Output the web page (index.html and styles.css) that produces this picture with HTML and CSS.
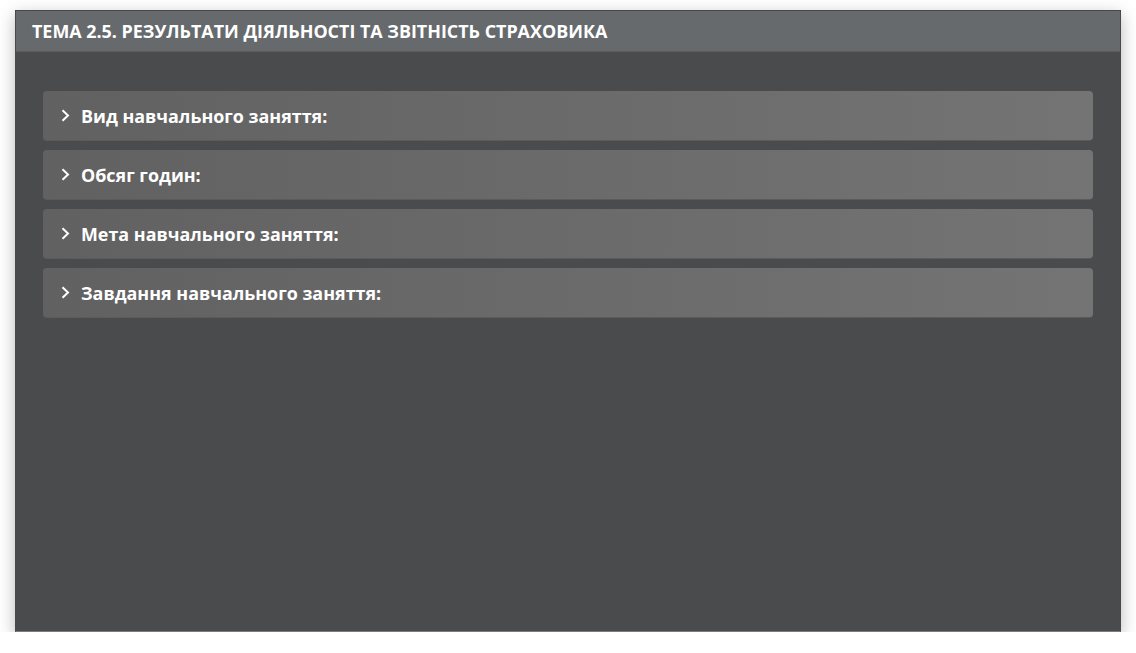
FILE: index.html
```html
<!DOCTYPE html>
<html lang="uk">
<head>
<meta charset="utf-8">
<title>Тема 2.5</title>
<link rel="stylesheet" href="styles.css">
</head>
<body>
<div class="frame">
  <div class="header">ТЕМА 2.5. РЕЗУЛЬТАТИ ДІЯЛЬНОСТІ ТА ЗВІТНІСТЬ СТРАХОВИКА</div>
  <div class="content">
    <div class="item"><svg class="chev" viewBox="0 0 9 13" width="9" height="13"><path d="M1.5 1.2 L7 6.5 L1.5 11.8" fill="none" stroke="#fff" stroke-width="2"/></svg><span>Вид навчального заняття:</span></div>
    <div class="item"><svg class="chev" viewBox="0 0 9 13" width="9" height="13"><path d="M1.5 1.2 L7 6.5 L1.5 11.8" fill="none" stroke="#fff" stroke-width="2"/></svg><span>Обсяг годин:</span></div>
    <div class="item"><svg class="chev" viewBox="0 0 9 13" width="9" height="13"><path d="M1.5 1.2 L7 6.5 L1.5 11.8" fill="none" stroke="#fff" stroke-width="2"/></svg><span>Мета навчального заняття:</span></div>
    <div class="item"><svg class="chev" viewBox="0 0 9 13" width="9" height="13"><path d="M1.5 1.2 L7 6.5 L1.5 11.8" fill="none" stroke="#fff" stroke-width="2"/></svg><span>Завдання навчального заняття:</span></div>
  </div>
</div>
</body>
</html>
```
FILE: styles.css
```css
html, body {
  margin: 0;
  padding: 0;
  background: #ffffff;
}
body {
  font-family: "Open Sans", "Noto Sans", sans-serif;
}
.frame {
  margin: 10px 0 0 15px;
  width: 1106px;
  height: 622px;
  box-sizing: border-box;
  background: #4a4b4d;
  border: 1px solid #48494b;
  border-bottom-color: #7a7b7c;
  box-shadow: 0 5px 16px rgba(0, 0, 0, 0.28);
  display: flex;
  flex-direction: column;
}
.header {
  height: 41px;
  box-sizing: border-box;
  background: #666a6d;
  border-bottom: 1px solid #5a5d60;
  color: #ffffff;
  font-weight: 700;
  font-size: 17.9px;
  padding-left: 16px;
  display: flex;
  align-items: center;
}
.content {
  padding: 39px 27px 0 27px;
  display: flex;
  flex-direction: column;
  gap: 9px;
}
.item {
  height: 50px;
  box-sizing: border-box;
  border-radius: 4px;
  background: linear-gradient(to right, #616161, #747474);
  border-bottom: 1px solid #5b5b5b;
  display: flex;
  align-items: center;
  padding-left: 18px;
  color: #ffffff;
  font-weight: 700;
  font-size: 17.9px;
}
.chev {
  margin-right: 11px;
  flex-shrink: 0;
}
```
